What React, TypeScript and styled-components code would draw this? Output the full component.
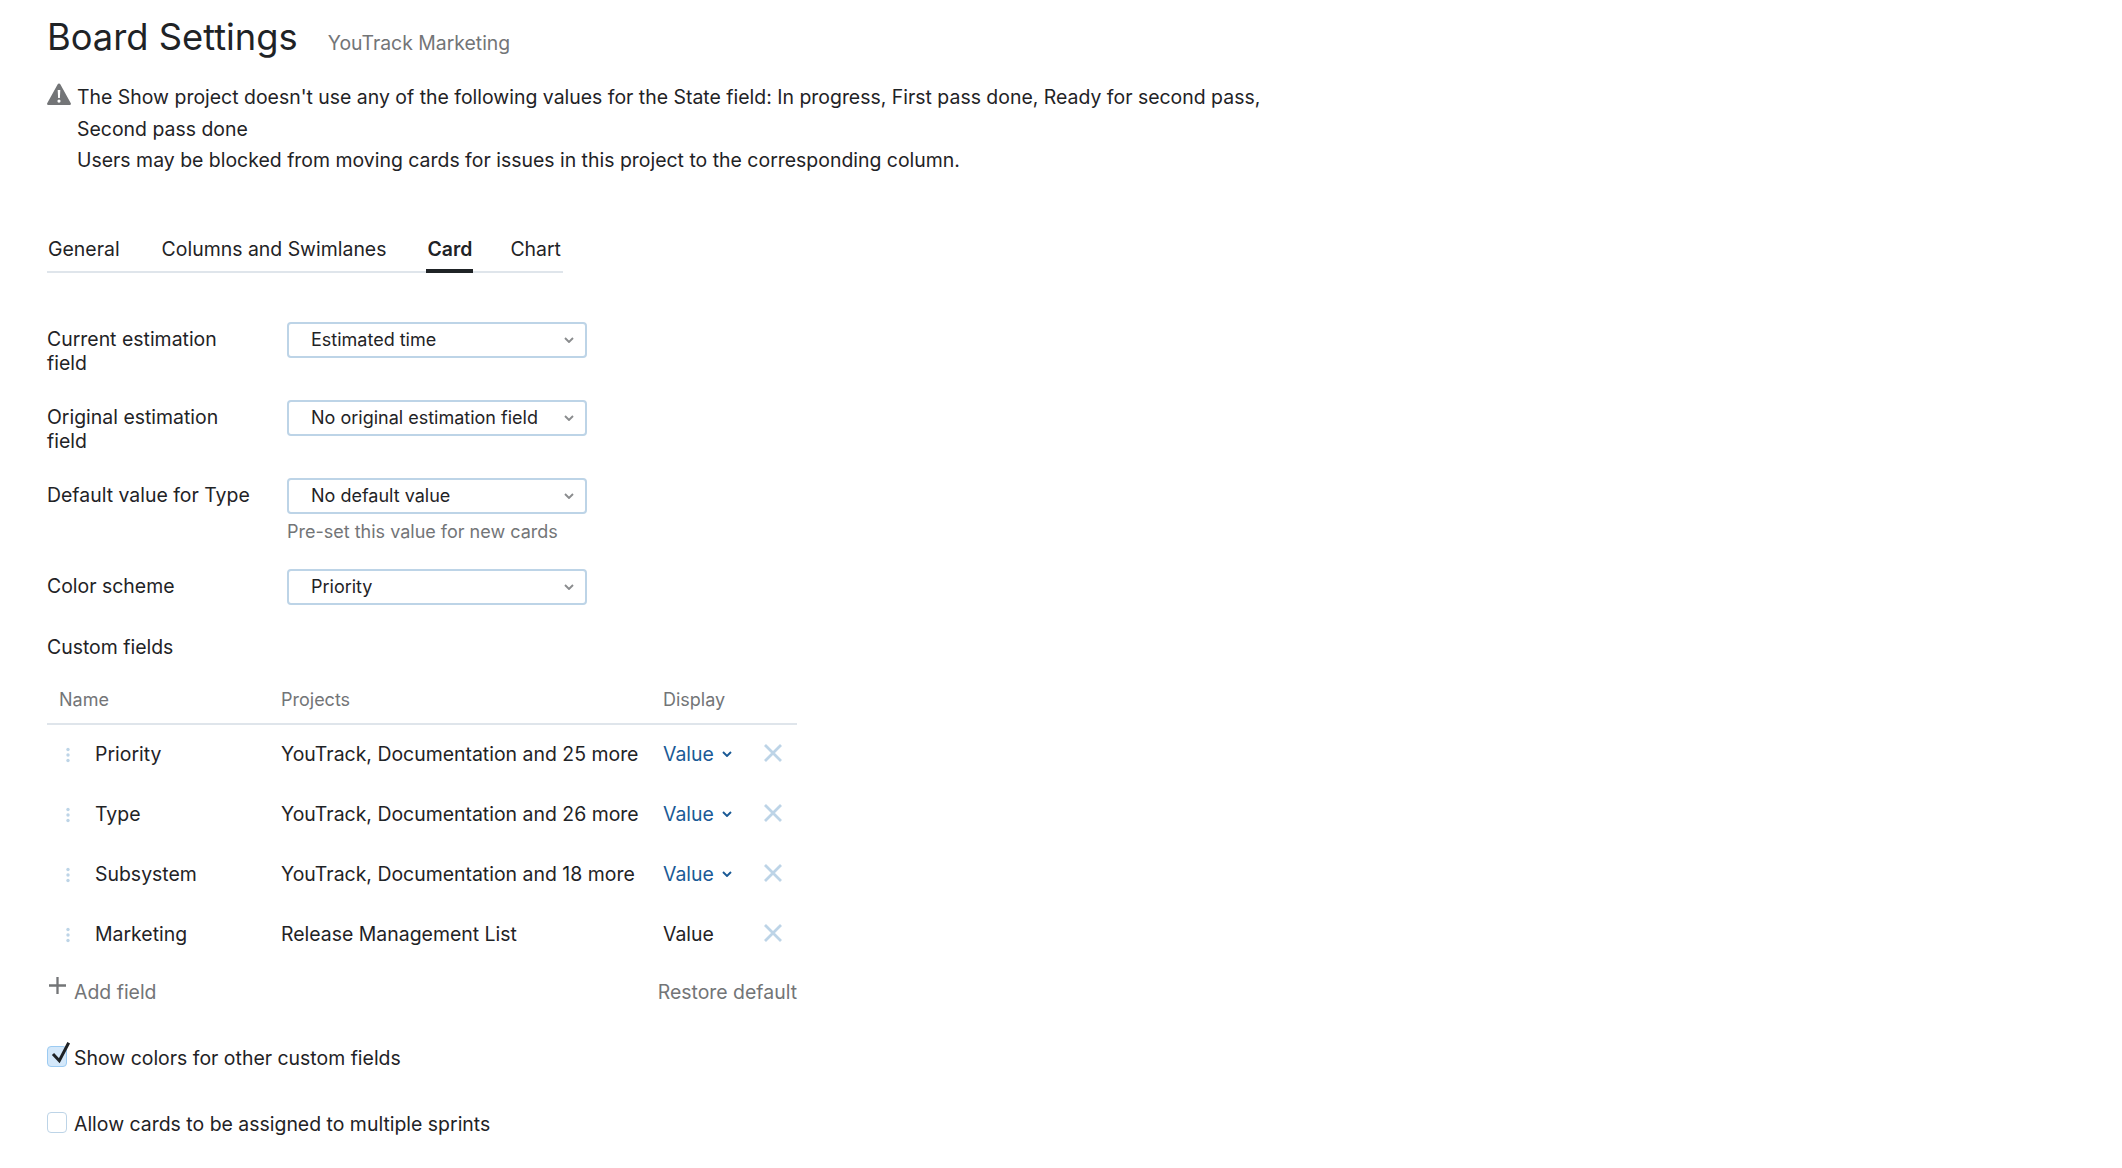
import React from 'react'
import styled, { createGlobalStyle } from 'styled-components'

const colors = {
  text: '#1f2326',
  secondary: '#737577',
  link: '#1a5a96',
  line: '#dfe5eb',
  control: '#bdd4e7',
  checked: '#d4e8fa',
}

const GlobalStyle = createGlobalStyle`
  html, body {
    margin: 0;
    padding: 0;
    background: #fff;
  }
  body {
    font-family: Inter, "Liberation Sans", sans-serif;
    font-size: 19.45px;
    line-height: 24px;
    color: ${colors.text};
  }
`

const Page = styled.div`
  display: flex;
  flex-direction: column;
  align-items: flex-start;
  width: 2122px;
  height: 1168px;
  padding: 16px 0 0 47px;
  box-sizing: border-box;
  overflow: hidden;
`

const Header = styled.div`
  display: flex;
  align-items: baseline;
  gap: 30px;
  height: 42px;
`

const Title = styled.h1`
  margin: 0;
  font-size: 36.3px;
  line-height: 42px;
  font-weight: 400;
`

const Subtitle = styled.span`
  font-size: 19.4px;
  color: ${colors.secondary};
`

const Warning = styled.div`
  display: flex;
  gap: 5px;
  margin-top: 24px;
  width: 1300px;
`

const WarningIcon = styled.svg`
  width: 26px;
  height: 24px;
  flex: none;
  margin-left: -1px;
`

const WarningText = styled.div`
  line-height: 31.5px;
`

const Tabs = styled.div`
  display: flex;
  margin-top: 52px;
  height: 42px;
  padding-right: 2px;
  border-bottom: 2px solid ${colors.line};
`

const Tab = styled.div<{ $active?: boolean; $gap: number }>`
  height: 44px;
  margin-left: ${(p) => p.$gap}px;
  padding: 0 1px;
  line-height: 40px;
  box-sizing: border-box;
  font-weight: ${(p) => (p.$active ? 600 : 400)};
  border-bottom: ${(p) => (p.$active ? `4px solid ${colors.text}` : 'none')};
  &:last-child {
    padding-right: 0;
  }
`

const Form = styled.div`
  display: flex;
  flex-direction: column;
  margin-top: 49px;
`

const FormRow = styled.div<{ $mb: number }>`
  display: grid;
  grid-template-columns: 240px 300px;
  margin-bottom: ${(p) => p.$mb}px;
`

const Label = styled.div`
  line-height: 24px;
  padding-top: 5px;
  width: 205px;
`

const SelectBox = styled.div`
  display: flex;
  align-items: center;
  justify-content: space-between;
  height: 36px;
  box-sizing: border-box;
  padding: 0 11px 0 22px;
  border: 2px solid ${colors.control};
  border-radius: 4px;
  font-size: 18px;
`

const Hint = styled.div`
  font-size: 18px;
  line-height: 24px;
  margin-top: 6px;
  margin-bottom: 1px;
  color: ${colors.secondary};
`

const Chevron = styled.svg<{ $color: string }>`
  width: 10px;
  height: 6px;
  flex: none;
  fill: none;
  stroke: ${(p) => p.$color};
  stroke-width: 1.9;
`

const SectionLabel = styled.div`
  margin-top: 30px;
`

const TableBox = styled.div`
  display: flex;
  flex-direction: column;
  width: 750px;
  margin-top: 29px;
`

const HeadRow = styled.div`
  display: grid;
  grid-template-columns: 222px 382px 1fr;
  height: 37px;
  margin-bottom: -1px;
  padding-left: 12px;
  box-sizing: border-box;
  border-bottom: 2px solid ${colors.line};
  font-size: 18px;
  color: ${colors.secondary};
`

const Row = styled.div`
  display: grid;
  grid-template-columns: 48px 186px 382px 100px 1fr;
  align-items: center;
  height: 60px;
`

const DragCell = styled.div`
  display: flex;
  justify-content: center;
  padding-right: 6px;
  padding-top: 2px;
`

const Grip = styled.svg`
  width: 4px;
  height: 16px;
  fill: ${colors.control};
`

const ValueCell = styled.div<{ $link?: boolean }>`
  display: flex;
  align-items: center;
  gap: 8px;
  color: ${(p) => (p.$link ? colors.link : colors.text)};
`

const RemoveIcon = styled.svg`
  width: 20px;
  height: 20px;
  fill: none;
  stroke: ${colors.control};
  stroke-width: 2.8;
  margin-top: -2px;
`

const TableFooter = styled.div`
  display: flex;
  align-items: center;
  justify-content: space-between;
  height: 40px;
  margin-top: 8px;
  color: ${colors.secondary};
`

const AddField = styled.div`
  display: flex;
  align-items: center;
  gap: 8px;
  padding-left: 2px;
`

const PlusIcon = styled.svg`
  width: 17px;
  height: 17px;
  fill: none;
  stroke: ${colors.secondary};
  stroke-width: 2.3;
  margin-top: -12px;
`

const CheckRow = styled.div<{ $first?: boolean }>`
  display: flex;
  align-items: center;
  gap: 7px;
  height: 24px;
  margin-top: ${(p) => (p.$first ? 34 : 42)}px;
`

const CheckBox = styled.div<{ $checked?: boolean }>`
  position: relative;
  width: 20px;
  height: 21px;
  margin-top: -2px;
  box-sizing: border-box;
  flex: none;
  border: 1px solid ${(p) => (p.$checked ? '#9ccbf2' : colors.control)};
  border-radius: 4px;
  background: ${(p) => (p.$checked ? colors.checked : '#fff')};
`

const CheckMark = styled.svg`
  position: absolute;
  left: -3px;
  top: -8px;
  width: 26px;
  height: 26px;
  fill: none;
  stroke: ${colors.text};
  stroke-width: 3;
`

const ChevronIcon: React.FC<{ color: string }> = ({ color }) => (
  <Chevron $color={color} viewBox="0 0 10 6">
    <path d="M1 1l4 4 4-4" />
  </Chevron>
)

const selects = [
  { label: 'Current estimation field', value: 'Estimated time', mb: 25 },
  { label: 'Original estimation field', value: 'No original estimation field', mb: 25 },
  { label: 'Default value for Type', value: 'No default value', hint: 'Pre-set this value for new cards', mb: 24 },
  { label: 'Color scheme', value: 'Priority', mb: 0 },
]

const fields = [
  { name: 'Priority', projects: 'YouTrack, Documentation and 25 more', link: true },
  { name: 'Type', projects: 'YouTrack, Documentation and 26 more', link: true },
  { name: 'Subsystem', projects: 'YouTrack, Documentation and 18 more', link: true },
  { name: 'Marketing', projects: 'Release Management List', link: false },
]

const App: React.FC = () => {
  return (
    <Page>
      <GlobalStyle />
      <Header>
        <Title>Board Settings</Title>
        <Subtitle>YouTrack Marketing</Subtitle>
      </Header>
      <Warning>
        <WarningIcon viewBox="0 0 26 24">
          <path
            fillRule="evenodd"
            fill="#737577"
            d="M13 1.500c.6 0 1 .3 1.300.8l10.500 19c.4.8 0 1.700-1 1.700H2.200c-1 0-1.400-.9-1-1.700l10.500-19c.3-.5.7-.8 1.300-.8zM11.700 8l.4 8h1.800l.4-8h-2.600zM13 17.500a1.600 1.600 0 100 3.200 1.600 1.600 0 000-3.200z"
          />
        </WarningIcon>
        <WarningText>
          The Show project doesn't use any of the following values for the State field: In progress, First pass done, Ready for second pass,
          <br />
          Second pass done
          <br />
          Users may be blocked from moving cards for issues in this project to the corresponding column.
        </WarningText>
      </Warning>
      <Tabs>
        <Tab $gap={0}>General</Tab>
        <Tab $gap={40}>Columns and Swimlanes</Tab>
        <Tab $gap={39} $active>Card</Tab>
        <Tab $gap={36}>Chart</Tab>
      </Tabs>
      <Form>
        {selects.map((s) => (
          <FormRow key={s.label} $mb={s.mb}>
            <Label>{s.label}</Label>
            <div>
              <SelectBox>
                {s.value}
                <ChevronIcon color="#8a8c8e" />
              </SelectBox>
              {s.hint && <Hint>{s.hint}</Hint>}
            </div>
          </FormRow>
        ))}
      </Form>
      <SectionLabel>Custom fields</SectionLabel>
      <TableBox>
        <HeadRow>
          <div>Name</div>
          <div>Projects</div>
          <div>Display</div>
        </HeadRow>
        {fields.map((f) => (
          <Row key={f.name}>
            <DragCell>
              <Grip viewBox="0 0 4 16">
                <circle cx="2" cy="2.500" r="1.700" />
                <circle cx="2" cy="8" r="1.700" />
                <circle cx="2" cy="13.500" r="1.700" />
              </Grip>
            </DragCell>
            <div>{f.name}</div>
            <div>{f.projects}</div>
            <ValueCell $link={f.link}>
              Value
              {f.link && <ChevronIcon color={colors.link} />}
            </ValueCell>
            <RemoveIcon viewBox="0 0 20 20">
              <path d="M2 2l16 16M18 2L2 18" />
            </RemoveIcon>
          </Row>
        ))}
        <TableFooter>
          <AddField>
            <PlusIcon viewBox="0 0 17 17">
              <path d="M8.500 0v17M0 8.500h17" />
            </PlusIcon>
            Add field
          </AddField>
          <div>Restore default</div>
        </TableFooter>
      </TableBox>
      <CheckRow $first>
        <CheckBox $checked>
          <CheckMark viewBox="0 0 26 26">
            <path d="M8 15l6.300 6.700L23.700 3.700" />
          </CheckMark>
        </CheckBox>
        Show colors for other custom fields
      </CheckRow>
      <CheckRow>
        <CheckBox />
        Allow cards to be assigned to multiple sprints
      </CheckRow>
    </Page>
  )
}

export default App
